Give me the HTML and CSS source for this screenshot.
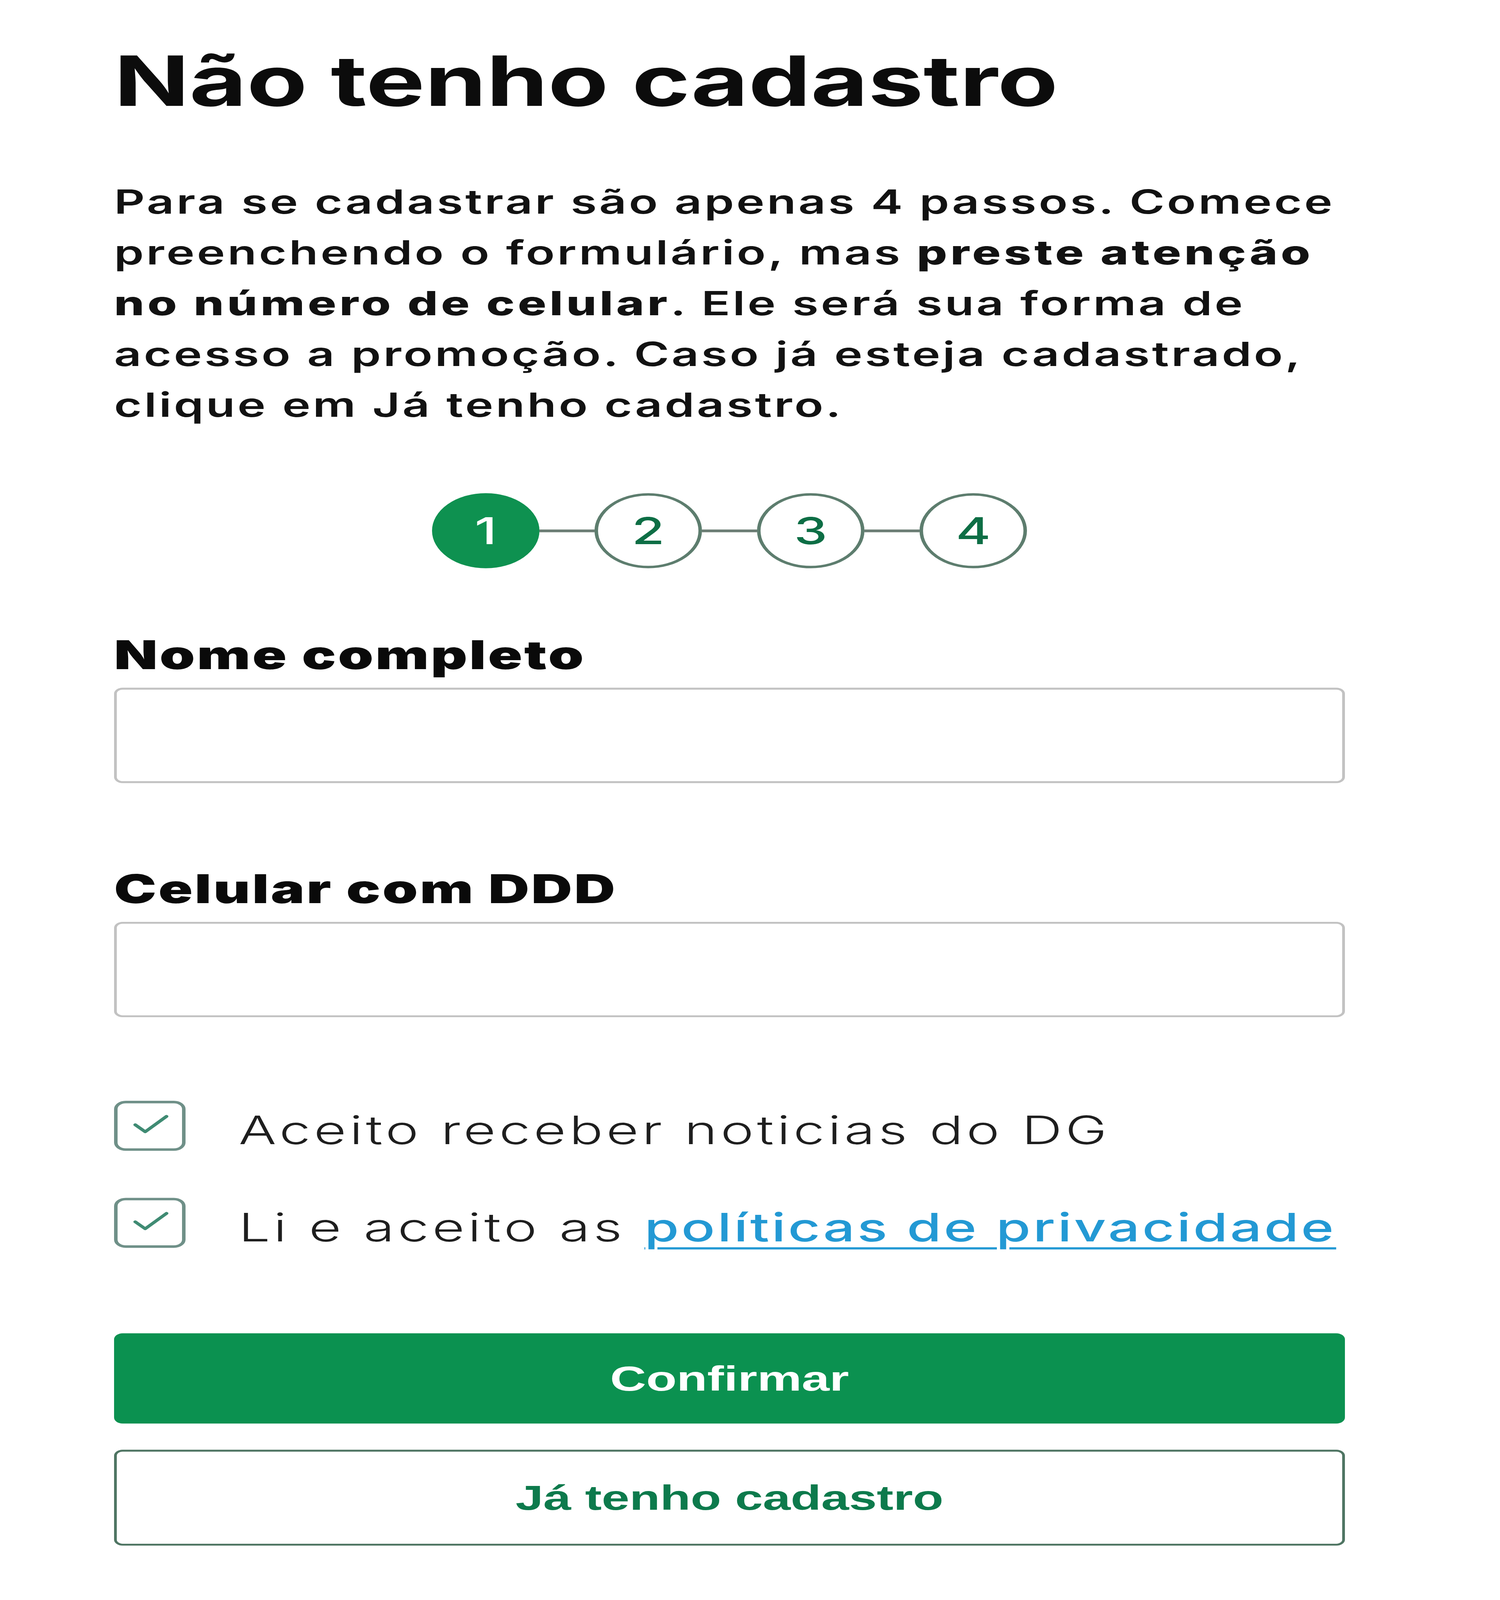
FILE: index.html
```html
<!DOCTYPE html>
<html lang="pt-BR">
<head>
<meta charset="utf-8">
<title>Não tenho cadastro</title>
<link rel="stylesheet" href="styles.css">
</head>
<body>
<div class="frame">
<main class="page">
  <h1 class="title">Não tenho cadastro</h1>
  <p class="intro">Para se cadastrar são apenas 4 passos. Comece<br>preenchendo o formulário, mas <strong>preste atenção</strong><br><strong>no número de celular</strong>. Ele será sua forma de<br>acesso a promoção. Caso já esteja cadastrado,<br>clique em Já tenho cadastro.</p>

  <ol class="steps">
    <li class="step active">1</li>
    <li class="link"></li>
    <li class="step">2</li>
    <li class="link"></li>
    <li class="step">3</li>
    <li class="link"></li>
    <li class="step">4</li>
  </ol>

  <form class="form">
    <label class="field">
      <span class="label">Nome completo</span>
      <input class="input" type="text">
    </label>
    <label class="field field-second">
      <span class="label">Celular com DDD</span>
      <input class="input" type="tel">
    </label>

    <div class="checks">
      <label class="check">
        <span class="box"><svg viewBox="0 0 182 182" class="tick"><polyline points="50,87 78,115 138,53"/></svg></span>
        <span class="check-text">Aceito receber noticias do DG</span>
      </label>
      <label class="check">
        <span class="box"><svg viewBox="0 0 182 182" class="tick"><polyline points="50,87 78,115 138,53"/></svg></span>
        <span class="check-text">Li e aceito as <a class="policy" href="#">políticas de privacidade</a></span>
      </label>
    </div>

    <button type="button" class="btn btn-primary">Confirmar</button>
    <button type="button" class="btn btn-secondary">Já tenho cadastro</button>
  </form>
</main>
</div>
<script src="app.js"></script>
</body>
</html>
```

FILE: styles.css
```css
html, body {
  margin: 0;
  padding: 0;
  background: #ffffff;
}

.frame {
  height: calc(5856px * var(--sy, 1));
  overflow: hidden;
}

.page {
  width: 3151px;
  padding: 145px 0 0 292px;
  font-family: Inter, "Liberation Sans", sans-serif;
  color: #111111;
  display: flex;
  flex-direction: column;
  transform: scaleY(var(--sy, 1));
  transform-origin: 0 0;
}

.title {
  margin: 0;
  font-size: 253px;
  font-weight: 700;
  line-height: 300px;
  color: #0c0c0c;
}

.intro {
  margin: 200px 0 0 0;
  font-size: 122px;
  font-weight: 600;
  line-height: 186px;
  letter-spacing: 6px;
  color: #121212;
}

.intro strong {
  font-weight: 800;
  letter-spacing: 8px;
}

.steps {
  list-style: none;
  margin: 230px 0 0 0;
  padding: 0;
  display: flex;
  justify-content: center;
  align-items: center;
}

.step {
  width: 275px;
  height: 275px;
  box-sizing: border-box;
  border-radius: 50%;
  border: 9px solid #5d7d6e;
  display: flex;
  align-items: center;
  justify-content: center;
  font-size: 136px;
  font-weight: 500;
  color: #0d6e45;
}

.step.active {
  background: #0e9150;
  border-color: #0e9150;
  color: #ffffff;
}

.link {
  width: 141px;
  height: 10px;
  background: #6b7d74;
}

.form {
  display: flex;
  flex-direction: column;
  margin-top: 227px;
}

.field {
  display: flex;
  flex-direction: column;
}

.field-second {
  margin-top: 298px;
}

.label {
  font-size: 145px;
  font-weight: 900;
  line-height: 180px;
  color: #0a0a0a;
  letter-spacing: 5px;
  margin-bottom: 30px;
}

.input {
  height: 349px;
  box-sizing: border-box;
  border: 7px solid #c2c2c2;
  border-radius: 22px;
  background: #ffffff;
  width: 100%;
  margin: 0;
  font-size: 110px;
}

.checks {
  display: flex;
  flex-direction: column;
  gap: 141px;
  margin-top: 306px;
}

.check {
  display: flex;
  align-items: flex-start;
  gap: 136px;
}

.box {
  width: 183px;
  height: 183px;
  box-sizing: border-box;
  border: 9px solid #6f9088;
  border-radius: 30px;
  display: flex;
  flex: none;
}

.tick {
  width: 100%;
  height: 100%;
}

.tick polyline {
  fill: none;
  stroke: #3f8b73;
  stroke-width: 11;
  stroke-linecap: round;
  stroke-linejoin: round;
}

.check-text {
  font-size: 143px;
  font-weight: 300;
  color: #1e1e1e;
  line-height: 214px;
  letter-spacing: 8.5px;
}

.policy {
  color: #2399d4;
  font-weight: 500;
  letter-spacing: 6px;
  text-decoration: underline;
  text-decoration-thickness: 8px;
  text-underline-offset: 22px;
}

.btn {
  width: 100%;
  box-sizing: border-box;
  border-radius: 22px;
  font-family: "Liberation Sans", Arial, sans-serif;
  font-size: 128px;
  font-weight: 700;
  cursor: pointer;
  margin: 0;
}

.btn-primary {
  margin-top: 282px;
  height: 330px;
  background: #0b9150;
  border: 0;
  color: #ffffff;
}

.btn-secondary {
  margin-top: 96px;
  height: 351px;
  background: #ffffff;
  border: 7px solid #4f7563;
  color: #0d7a4c;
}
```

FILE: app.js
```js
(function () {
  var designHeight = 5856;
  var sy = Math.min(1, window.innerHeight / designHeight);
  document.documentElement.style.setProperty('--sy', String(sy));
})();
```
